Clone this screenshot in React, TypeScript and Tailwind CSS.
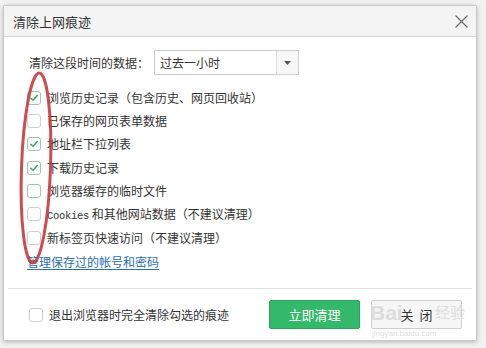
import React from 'react'

type Item = { label: React.ReactNode; checked: boolean; hover?: boolean }

const items: Item[] = [
  { label: '浏览历史记录（包含历史、网页回收站）', checked: true },
  { label: '已保存的网页表单数据', checked: false },
  { label: '地址栏下拉列表', checked: true },
  { label: '下载历史记录', checked: true },
  { label: '浏览器缓存的临时文件', checked: false, hover: true },
  {
    label: (
      <>
        <span className="font-['Liberation_Mono',monospace] text-[10.5px] tracking-[-0.3px]">Cookies</span> 和其他网站数据（不建议清理）
      </>
    ),
    checked: false,
  },
  { label: '新标签页快速访问（不建议清理）', checked: false },
]

function Checkbox({ checked, hover }: { checked: boolean; hover?: boolean }) {
  return (
    <span
      className={`flex h-[14px] w-[14px] shrink-0 items-center justify-center rounded-[3px] border bg-white ${
        checked || hover ? 'border-[#8fcfa3]' : 'border-[#cfcfcf]'
      }`}
    >
      {checked && (
        <svg width="10" height="10" viewBox="0 0 10 10">
          <path d="M1.8 5.2 L4 7.3 L8.3 2.6" fill="none" stroke="#3aa864" strokeWidth="1.5" strokeLinecap="round" strokeLinejoin="round" />
        </svg>
      )}
    </span>
  )
}

export default function App() {
  return (
    <div className="relative h-[348px] w-[486px] overflow-hidden bg-[#f1f1f1] pl-[3px] pt-[5px] font-['Noto_Sans_CJK_SC',sans-serif] text-[#333]">
      <div className="flex h-[336px] w-[474px] flex-col rounded-[2px] border border-[#c9c9c9] bg-white shadow-[0_1px_4px_rgba(0,0,0,0.25)]">
        <div className="flex h-[31px] shrink-0 items-center justify-between border-b border-[#d6d6d6] bg-[#f4f4f4] pl-[9px] pr-[8px]">
          <span className="text-[13px] leading-none text-[#333]">清除上网痕迹</span>
          <svg width="13" height="13" viewBox="0 0 13 13">
            <path d="M0.5 0.5 L12.5 12.5 M12.5 0.5 L0.5 12.5" stroke="#666" strokeWidth="1.1" />
          </svg>
        </div>

        <div className="flex flex-1 flex-col">
          <div className="flex items-center pl-[25px] pt-[13px]">
            <span className="w-[125px] text-[12px] leading-none">清除这段时间的数据：</span>
            <div className="flex h-[25px] w-[145px] items-stretch border border-[#cdcdcd] bg-white">
              <span className="flex flex-1 items-center pl-[5px] text-[12px] leading-none">过去一小时</span>
              <span className="flex w-[22px] items-center justify-center border-l border-[#dcdcdc] bg-[#f7f7f7]">
                <svg width="7" height="4" viewBox="0 0 7 4">
                  <path d="M0 0 L7 0 L3.5 4 Z" fill="#555" />
                </svg>
              </span>
            </div>
          </div>

          <div className="mt-[11px] flex flex-col pl-[23px]">
            {items.map((it, i) => (
              <div key={i} className="flex h-[23.35px] items-center gap-[6px]">
                <Checkbox checked={it.checked} hover={it.hover} />
                <span className="text-[12px] leading-none">{it.label}</span>
              </div>
            ))}
          </div>

          <div className="flex h-[25px] items-center pl-[23px]">
            <span className="text-[12px] leading-none text-[#2a6fb0] underline underline-offset-2">管理保存过的帐号和密码</span>
          </div>

          <div className="mx-[4px] mt-auto border-t border-[#e2e2e2]" />
          <div className="flex h-[51px] items-center pl-[25px] pr-[14px]">
            <Checkbox checked={false} />
            <span className="ml-[6px] text-[12px] leading-none">退出浏览器时完全清除勾选的痕迹</span>
            <button
              type="button"
              className="ml-auto flex h-[29px] w-[91px] items-center justify-center rounded-[2px] border border-[#28a45c] bg-[#34b86a] text-[13px] text-white"
            >
              立即清理
            </button>
            <button
              type="button"
              className="ml-[11px] flex h-[29px] w-[91px] items-center justify-center rounded-[2px] border border-[#cfcfcf] bg-[#f6f6f6] text-[13px] text-[#333]"
            >
              关&nbsp;&nbsp;闭
            </button>
          </div>
        </div>
      </div>

      {/* baidu watermark, split around the button text */}
      <span className="pointer-events-none absolute left-[370px] top-[302px] font-['Liberation_Sans',sans-serif] text-[21px] font-bold leading-none text-[#dcdcdc]">
        Bai
      </span>
      <span className="pointer-events-none absolute left-[435px] top-[304px] text-[15px] leading-none text-[#dcdcdc]">经验</span>
      <span className="pointer-events-none absolute left-[372px] top-[330px] font-['Liberation_Sans',sans-serif] text-[8px] leading-none text-[#dedede]">
        jingyan.baidu.com
      </span>

      {/* red annotation */}
      <svg className="pointer-events-none absolute left-0 top-0" width="486" height="348">
        <ellipse cx="36" cy="168" rx="14.5" ry="95" fill="none" stroke="#c9393c" strokeWidth="3" transform="rotate(2 36 168)" opacity="0.9" />
      </svg>
    </div>
  )
}
